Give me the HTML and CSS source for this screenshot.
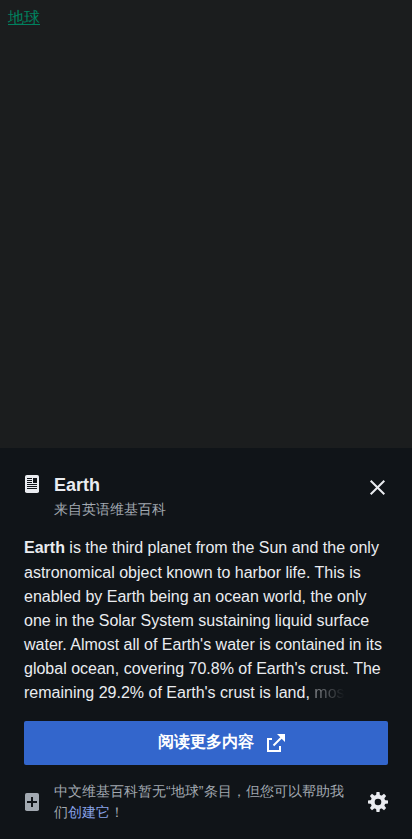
FILE: index.html
```html
<!DOCTYPE html>
<html lang="zh">
<head>
<meta charset="utf-8">
<meta name="viewport" content="width=device-width, initial-scale=1">
<title>地球</title>
<link rel="stylesheet" href="styles.css">
</head>
<body>
<main class="page"><a class="page-link" href="#">地球</a></main>
<section class="preview">
  <header class="preview-header">
    <svg class="article-icon" viewBox="0 0 14 18"><rect width="14" height="18" rx="1.8" fill="#eaecf0"/><path d="M2 3.5h5M2 5.5h5M2 7.5h5M2 9.5h10M2 11.5h10M2 13.5h10" stroke="#101418"/><path d="M8 3h4v5H8z" fill="#101418"/></svg>
    <div class="heading">
      <h1>Earth</h1>
      <p>来自英语维基百科</p>
    </div>
    <svg class="close-icon" viewBox="0 0 20 20"><path d="m3.7 3.7 13.6 13.6M17.3 3.7 3.7 17.3" fill="none" stroke="#eaecf0" stroke-width="2"/></svg>
  </header>
  <div class="extract"><b>Earth</b> is the third planet from the Sun and the only astronomical object known to harbor life. This is enabled by Earth being an ocean world, the only one in the Solar System sustaining liquid surface water. Almost all of Earth's water is contained in its global ocean, covering 70.8% of Earth's crust. The remaining 29.2% of Earth's crust is land, <span class="fade">mos</span></div>
  <a class="read-more" href="#"><span>阅读更多内容</span><svg class="external-icon" viewBox="0 0 20 20"><path d="M13 17H3V7h3V5H1v14h14v-6h-2zM11 1l3.3 3.3-7.5 7.5 1.4 1.4 7.5-7.5L19 9V1z"/></svg></a>
  <footer class="preview-footer">
    <svg class="add-icon" viewBox="0 0 14 18"><rect width="14" height="18" rx="1.8" fill="#a2a9b1"/><path d="M7 4v10M2 9h10" stroke="#101418" stroke-width="2"/></svg>
    <p>中文维基百科暂无“地球<span class="quote-end">”</span>条目，但您可以帮助我们<a href="#">创建它</a>！</p>
    <svg class="settings-icon" viewBox="0 0 20 20"><g fill="#eaecf0"><g id="teeth"><path id="tooth" d="M8 4 8.5 0h3l.5 4v12l-.5 4h-3L8 16z"/><use href="#tooth" transform="rotate(90 10 10)"/></g><use href="#teeth" transform="rotate(45 10 10)"/></g><circle cx="10" cy="10" r="5.3" fill="none" stroke="#eaecf0" stroke-width="4"/><circle cx="10" cy="10" r="3.3" fill="#101418"/></svg>
  </footer>
</section>
</body>
</html>
```
FILE: styles.css
```css
* { box-sizing: border-box; }
body { margin: 0; height: 839px; display: flex; flex-direction: column; overflow: hidden; background: #1b1d1e; font-family: "Liberation Sans", sans-serif; }
.page { flex: 1; padding: 8px; font-size: 16px; line-height: 19px; }
.page-link { color: #00815f; }
.preview { height: 391px; padding: 24px 24px 0; background: #101418; color: #eaecf0; }
h1, p { margin: 0; }
svg { display: block; flex: none; }
.preview-header { display: flex; height: 64px; }
.article-icon { width: 14px; height: 18px; margin: 3px 0 0 1px; }
.heading { flex: 1; margin-left: 15px; }
h1 { font-size: 18px; line-height: 25px; padding-top: 1px; }
.heading p { font-size: 14px; line-height: 21px; margin-top: 1px; color: #a2a9b1; }
.close-icon { width: 20px; height: 20px; margin: 5px 1px 0 0; }
.extract { height: 168px; font-size: 16px; line-height: 24.1px; padding-top: .45px; }
.fade { color: transparent; background: linear-gradient(to right, #83868a, #101418); background-clip: text; -webkit-background-clip: text; }
.read-more { display: flex; align-items: center; justify-content: center; height: 44px; margin-top: 17px; padding-left: 31px; border-radius: 2px; background: #36c; color: #fff; font-size: 16px; font-weight: 700; text-decoration: none; }
.read-more span { padding-bottom: 2px; }
.external-icon { width: 20px; height: 20px; margin-left: 12px; fill: #fff; }
.preview-footer { display: flex; align-items: center; height: 74px; }
.add-icon { width: 14px; height: 18px; margin: 0 15px 0 1px; }
.preview-footer p { width: 294px; font-size: 14px; line-height: 21px; color: #a2a9b1; }
.quote-end { margin-right: .8px; }
.preview-footer a { color: #88a3e8; text-decoration: none; }
.settings-icon { width: 20px; height: 20px; margin-left: auto; }
```
